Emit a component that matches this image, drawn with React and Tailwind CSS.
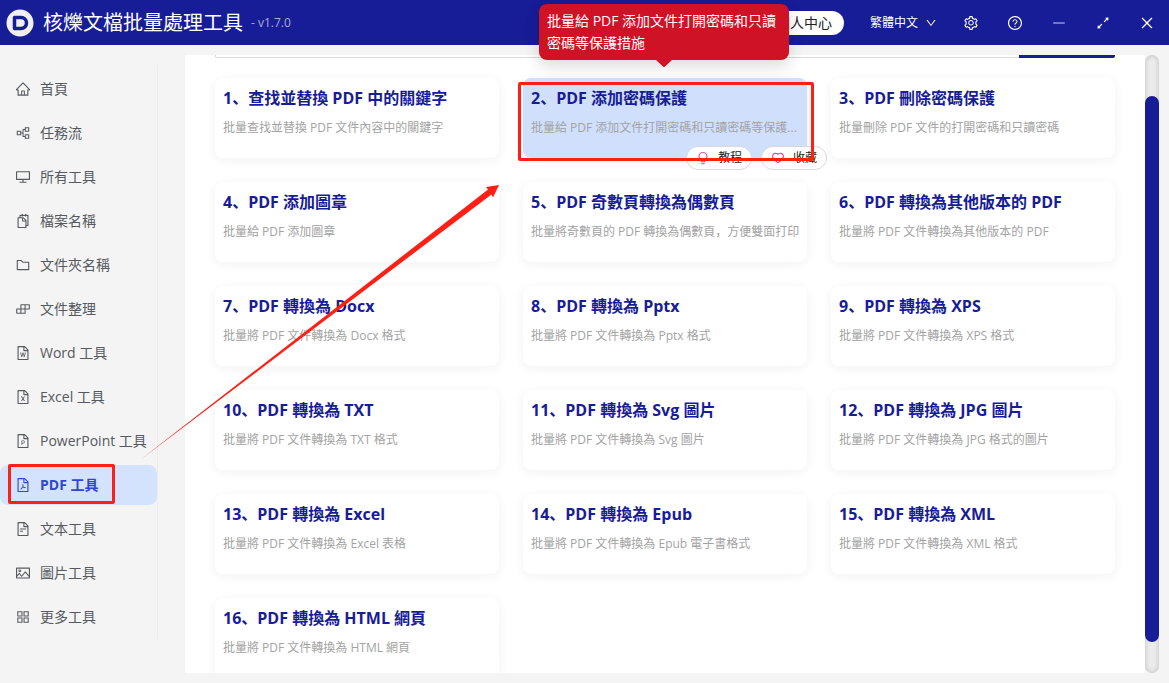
import { useState } from 'react'
import {
  AiOutlineAppstore,
  AiOutlineArrowsAlt,
  AiOutlineBuild,
  AiOutlineBulb,
  AiOutlineClose,
  AiOutlineDesktop,
  AiOutlineDown,
  AiOutlineFileExcel,
  AiOutlineFilePdf,
  AiOutlineFilePpt,
  AiOutlineFileText,
  AiOutlineFileWord,
  AiOutlineFolder,
  AiOutlineHeart,
  AiOutlineHome,
  AiOutlineMinus,
  AiOutlinePartition,
  AiOutlinePicture,
  AiOutlineQuestionCircle,
  AiOutlineSetting,
  AiOutlineSnippets
} from 'react-icons/ai'

const menu = [
  { label: '首頁', icon: AiOutlineHome },
  { label: '任務流', icon: AiOutlinePartition },
  { label: '所有工具', icon: AiOutlineDesktop },
  { label: '檔案名稱', icon: AiOutlineSnippets },
  { label: '文件夾名稱', icon: AiOutlineFolder },
  { label: '文件整理', icon: AiOutlineBuild },
  { label: 'Word 工具', icon: AiOutlineFileWord },
  { label: 'Excel 工具', icon: AiOutlineFileExcel },
  { label: 'PowerPoint 工具', icon: AiOutlineFilePpt },
  { label: 'PDF 工具', icon: AiOutlineFilePdf, marked: true },
  { label: '文本工具', icon: AiOutlineFileText },
  { label: '圖片工具', icon: AiOutlinePicture },
  { label: '更多工具', icon: AiOutlineAppstore }
]

const tools = [
  { title: '查找並替換 PDF 中的關鍵字', desc: '批量查找並替換 PDF 文件內容中的關鍵字' },
  { title: 'PDF 添加密碼保護', desc: '批量給 PDF 添加文件打開密碼和只讀密碼等保護...', active: true },
  { title: 'PDF 刪除密碼保護', desc: '批量刪除 PDF 文件的打開密碼和只讀密碼' },
  { title: 'PDF 添加圖章', desc: '批量給 PDF 添加圖章' },
  { title: 'PDF 奇數頁轉換為偶數頁', desc: '批量將奇數頁的 PDF 轉換為偶數頁，方便雙面打印' },
  { title: 'PDF 轉換為其他版本的 PDF', desc: '批量將 PDF 文件轉換為其他版本的 PDF' },
  { title: 'PDF 轉換為 Docx', desc: '批量將 PDF 文件轉換為 Docx 格式' },
  { title: 'PDF 轉換為 Pptx', desc: '批量將 PDF 文件轉換為 Pptx 格式' },
  { title: 'PDF 轉換為 XPS', desc: '批量將 PDF 文件轉換為 XPS 格式' },
  { title: 'PDF 轉換為 TXT', desc: '批量將 PDF 文件轉換為 TXT 格式' },
  { title: 'PDF 轉換為 Svg 圖片', desc: '批量將 PDF 文件轉換為 Svg 圖片' },
  { title: 'PDF 轉換為 JPG 圖片', desc: '批量將 PDF 文件轉換為 JPG 格式的圖片' },
  { title: 'PDF 轉換為 Excel', desc: '批量將 PDF 文件轉換為 Excel 表格' },
  { title: 'PDF 轉換為 Epub', desc: '批量將 PDF 文件轉換為 Epub 電子書格式' },
  { title: 'PDF 轉換為 XML', desc: '批量將 PDF 文件轉換為 XML 格式' },
  { title: 'PDF 轉換為 HTML 網頁', desc: '批量將 PDF 文件轉換為 HTML 網頁' }
]

const windowButtons = [
  { label: '設置', icon: AiOutlineSetting },
  { label: '幫助', icon: AiOutlineQuestionCircle },
  { label: '最小化', icon: AiOutlineMinus, dim: true },
  { label: '最大化', icon: AiOutlineArrowsAlt },
  { label: '關閉', icon: AiOutlineClose }
]

function Header() {
  return (
    <header className="h-[45px] shrink-0 flex items-center bg-[#171c97] text-white">
      <svg className="ml-[6px]" width="28" height="28" viewBox="0 0 28 28">
        <circle cx="14" cy="14" r="13.5" fill="#f0f0f0" />
        <path d="M8.500 8.500H15a5.500 5.500 0 0 1 0 11H8.500Z" fill="none" stroke="#171c97" strokeWidth="3.500" strokeLinejoin="round" />
      </svg>
      <h1 className="ml-[9px] text-xl leading-6">核爍文檔批量處理工具</h1>
      <span className="ml-2 text-xs text-[#a9acd8]">- v1.7.0</span>
      <div className="flex-1" />
      <button className="h-6 px-3 rounded-full bg-white text-[#222] text-sm leading-6">個人中心</button>
      <label className="ml-[26px] mr-3 flex items-center gap-[6px]">
        <select aria-label="語言" className="appearance-none bg-transparent text-xs text-white outline-none">
          <option>繁體中文</option>
        </select>
        <AiOutlineDown className="w-3 h-3" />
      </label>
      {windowButtons.map(({ label, icon: Icon, dim }) => (
        <button key={label} aria-label={label} className="w-11 h-11 flex items-center justify-center">
          <Icon className={dim ? 'w-4 h-4 opacity-80' : 'w-4 h-4'} />
        </button>
      ))}
    </header>
  )
}

function Sidebar({ current, onSelect }) {
  return (
    <nav className="w-[158px] shrink-0 mt-5 mb-11 pt-1 flex flex-col gap-1 border-r border-[#ececec]">
      {menu.map(({ label, icon: Icon, marked }) => (
        <button
          key={label}
          onClick={() => onSelect(label)}
          className={
            'relative h-10 shrink-0 pl-[15px] flex items-center gap-[9px] rounded-lg text-sm whitespace-nowrap ' +
            (current === label ? 'bg-[#d3e3fd] text-[#3246cd] font-bold' : 'text-[#555a60]')
          }
        >
          <Icon className="w-4 h-4" />
          {label}
          {marked && <span className="absolute left-2 -top-px w-[107px] h-10 border-3 border-[#ff2015] rounded-xs" />}
        </button>
      ))}
    </nav>
  )
}

function ToolCard({ index, title, desc, active }) {
  return (
    <article
      className={
        'relative h-20 min-w-0 pl-2 pr-1 pt-2 rounded-lg shadow-[0_2px_12px_rgba(0,0,0,0.06)] ' +
        (active ? 'bg-[#d0e0fc]' : 'bg-white')
      }
    >
      <h2 className="text-base leading-6 font-bold text-[#171c97] whitespace-nowrap">{index}、{title}</h2>
      <p className="mt-2 text-xs leading-5 text-[#a3a3a3] truncate">{desc}</p>
      {active && (
        <>
          <div className="absolute -right-5 -bottom-3 flex gap-[9px]">
            <button className="h-6 w-[66px] flex items-center justify-center gap-2 rounded-full border border-[#d9d9d9] bg-white text-xs text-[#222]">
              <AiOutlineBulb className="w-[14px] h-[14px] text-[#eb2f96]" />
              教程
            </button>
            <button className="h-6 w-[66px] flex items-center justify-center gap-2 rounded-full border border-[#d9d9d9] bg-white text-xs text-[#222]">
              <AiOutlineHeart className="w-[14px] h-[14px] text-[#eb2f96]" />
              收藏
            </button>
          </div>
          <span className="absolute -left-[5px] -right-[7px] top-1 -bottom-[3px] border-3 border-[#ff2015] rounded-xs" />
        </>
      )}
    </article>
  )
}

export default function App() {
  const [current, setCurrent] = useState('PDF 工具')

  return (
    <div
      lang="zh-CN"
      className="relative h-screen flex flex-col overflow-hidden bg-[#f4f4f4] font-['Open_Sans','Noto_Sans_CJK_SC',sans-serif]"
    >
      <Header />
      <div className="flex-1 min-h-0 flex">
        <Sidebar current={current} onSelect={setCurrent} />
        <main className="flex-1 min-w-0 ml-[27px] mt-[10px] mb-[10px] px-[30px] bg-white overflow-hidden">
          <div className="h-[3px] flex">
            <div className="flex-1 border-l border-b border-[#d9d9d9] rounded-bl-xs" />
            <div className="w-24 bg-[#171c97] rounded-br-xs" />
          </div>
          <div className="mt-5 grid grid-cols-3 gap-6">
            {tools.map((t, i) => (
              <ToolCard key={t.title} index={i + 1} {...t} />
            ))}
          </div>
        </main>
        <div className="w-[14px] my-[10px] mr-[10px] pt-[41px] pb-[31px] rounded-full bg-[#ebebeb] shadow-[inset_0_0_5px_rgba(0,0,0,0.2)]">
          <div className="h-full rounded-full bg-[#171c97]" />
        </div>
      </div>

      <div
        role="tooltip"
        className="absolute left-[539px] top-1 w-[250px] px-2 py-[6px] rounded-lg bg-[#cf1226] text-white text-sm leading-[22px] shadow-[0_6px_16px_rgba(0,0,0,0.15)]"
      >
        批量給 PDF 添加文件打開密碼和只讀密碼等保護措施
        <svg className="absolute left-1/2 top-full -ml-2" width="16" height="8" viewBox="0 0 16 8">
          <path d="M0 0H16L9 6.500Q8 7.500 7 6.500Z" fill="#cf1226" />
        </svg>
      </div>

      <svg className="absolute left-[138px] top-[182px] pointer-events-none" width="364" height="280" viewBox="0 0 364 280">
        <path d="M2 278L350 7.500L348 5L361 3L355 15.500L353.500 12.500Z" fill="#ff2015" />
      </svg>
    </div>
  )
}
